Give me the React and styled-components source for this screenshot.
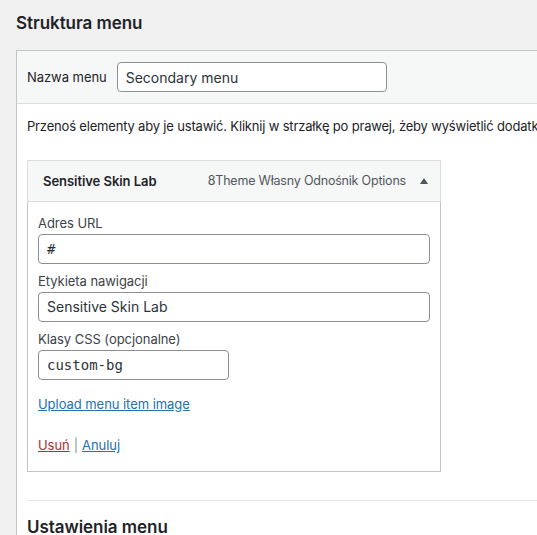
import React from 'react'
import styled, { createGlobalStyle } from 'styled-components'

const GlobalStyle = createGlobalStyle`
  html, body {
    margin: 0;
    padding: 0;
    background: #f0f0f1;
    overflow: hidden;
  }
  body {
    font-family: Inter, "Open Sans", "Liberation Sans", sans-serif;
    font-size: 13px;
    letter-spacing: -0.05px;
    color: #1d2327;
  }
`

const Page = styled.div`
  padding-left: 16px;
  height: 535px;
  overflow: hidden;
`

const PageTitle = styled.h2`
  margin: 0;
  padding-top: 12px;
  height: 50px;
  font-size: 17px;
  line-height: 22px;
  font-weight: 600;
  color: #1d2327;
  box-sizing: border-box;
`

const Panel = styled.div`
  width: 640px;
  border: 1px solid #c3c4c7;
  border-right: none;
  background: #fff;
  min-height: 500px;
`

const NameBar = styled.div`
  display: flex;
  align-items: center;
  gap: 10px;
  padding: 11px 10px;
  background: #f6f7f7;
  border-bottom: 1px solid #dcdcde;
`

const BarLabel = styled.label`
  font-size: 13px;
  color: #1d2327;
`

const TextInput = styled.input`
  box-sizing: border-box;
  width: ${(p) => p.$width || '100%'};
  height: 30px;
  padding: 0 8px;
  border: 1px solid #8c8f94;
  border-radius: 4px;
  background: #fff;
  color: #2c3338;
  font-family: ${(p) =>
    p.$mono ? '"DejaVu Sans Mono", "Liberation Mono", monospace' : 'Inter, "Open Sans", sans-serif'};
  font-size: 14px;
  outline: none;
`

const Body = styled.div`
  padding: 0 10px;
`

const Hint = styled.p`
  margin: 13px 0;
  line-height: 19.5px;
  letter-spacing: -0.18px;
  white-space: nowrap;
`

const Item = styled.div`
  width: 414px;
  box-sizing: border-box;
  margin-top: 23px;
  border: 1px solid #dcdcde;
`

const ItemHead = styled.div`
  display: flex;
  align-items: center;
  height: 40px;
  padding: 0 12px 0 15px;
  background: #f6f7f7;
  border-bottom: 1px solid #dcdcde;
`

const ItemTitle = styled.span`
  font-weight: 600;
  color: #1d2327;
`

const ItemType = styled.span`
  margin-left: auto;
  font-size: 12.5px;
  letter-spacing: -0.2px;
  color: #50575e;
`

const Arrow = styled.span`
  margin-left: 14px;
  width: 0;
  height: 0;
  border-left: 4px solid transparent;
  border-right: 4px solid transparent;
  border-bottom: 6px solid #50575e;
`

const Settings = styled.div`
  padding: 12px 10px 15px;
  border: 1px solid #c3c4c7;
  border-top: none;
  margin: 0 -1px -1px;
`

const Field = styled.div`
  display: flex;
  flex-direction: column;
  gap: 1px;
  margin-top: ${(p) => (p.$first ? '0' : '8px')};
`

const FieldLabel = styled.label`
  line-height: 19px;
  color: #3c434a;
`

const LinkRow = styled.div`
  margin-top: ${(p) => p.$mt || '0'};
  line-height: 19.5px;
`

const Link = styled.a`
  color: ${(p) => (p.$danger ? '#b32d2e' : '#2271b1')};
  text-decoration: underline;
  cursor: pointer;
`

const Sep = styled.span`
  color: #8c8f94;
  margin: 0 4px;
`

const Divider = styled.div`
  margin-top: 28px;
  border-top: 1px solid #e4e4e7;
`

const SectionTitle = styled.h3`
  margin: 15px 0 0;
  font-size: 17px;
  line-height: 22px;
  font-weight: 600;
  color: #1d2327;
`

export default function App() {
  return (
    <>
      <GlobalStyle />
      <Page>
        <PageTitle>Struktura menu</PageTitle>
        <Panel>
          <NameBar>
            <BarLabel>Nazwa menu</BarLabel>
            <TextInput $width="270px" defaultValue="Secondary menu" />
          </NameBar>
          <Body>
            <Hint>
              Przenoś elementy aby je ustawić. Kliknij w strzałkę po prawej, żeby wyświetlić dodatkowe opcje konfiguracji.
            </Hint>
            <Item>
              <ItemHead>
                <ItemTitle>Sensitive Skin Lab</ItemTitle>
                <ItemType>8Theme Własny Odnośnik Options</ItemType>
                <Arrow />
              </ItemHead>
              <Settings>
                <Field $first>
                  <FieldLabel>Adres URL</FieldLabel>
                  <TextInput $mono defaultValue="#" />
                </Field>
                <Field>
                  <FieldLabel>Etykieta nawigacji</FieldLabel>
                  <TextInput defaultValue="Sensitive Skin Lab" />
                </Field>
                <Field>
                  <FieldLabel>Klasy CSS (opcjonalne)</FieldLabel>
                  <TextInput $mono $width="191px" defaultValue="custom-bg" />
                </Field>
                <LinkRow $mt="15px">
                  <Link>Upload menu item image</Link>
                </LinkRow>
                <LinkRow $mt="22px">
                  <Link $danger>Usuń</Link>
                  <Sep>|</Sep>
                  <Link>Anuluj</Link>
                </LinkRow>
              </Settings>
            </Item>
            <Divider />
            <SectionTitle>Ustawienia menu</SectionTitle>
          </Body>
        </Panel>
      </Page>
    </>
  )
}
